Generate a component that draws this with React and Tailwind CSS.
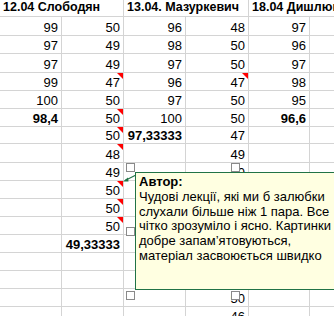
const COLS = ['w-[62px]', 'w-[62px]', 'w-[62px]', 'w-[63px]', 'w-[61px]', 'w-[40px]'];

// value, bold, red comment marker
const ROWS = [
  { h: 'h-[19px]', cells: ['99', '50', '96', '48', '97'] },
  { h: 'h-[18px]', cells: ['97', '49', '98', '50', '96'] },
  { h: 'h-[19px]', cells: ['97', '49', '97', '50', '97'] },
  { h: 'h-[18px]', cells: ['99', '47', '96', '47', '98'], marks: [1, 3] },
  { h: 'h-[18px]', cells: ['100', '50', '97', '50', '95'] },
  { h: 'h-[18px]', cells: ['98,4', '50', '100', '50', '96,6'], bold: [0, 4], marks: [1] },
  { h: 'h-[17px]', cells: ['', '50', '97,33333', '47', ''], bold: [2], marks: [1] },
  { h: 'h-[19px]', cells: ['', '48', '', '49', ''], marks: [1] },
  { h: 'h-[18px]', cells: ['', '49', '', '50', ''] },
  { h: 'h-[18px]', cells: ['', '50', '', '', ''], marks: [1] },
  { h: 'h-[18px]', cells: ['', '50', '', '', ''], marks: [1] },
  { h: 'h-[18px]', cells: ['', '50', '', '', ''], marks: [1] },
  { h: 'h-[18px]', cells: ['', '49,33333', '', '', ''], bold: [1] },
  { h: 'h-[18px]', cells: ['', '', '', '', ''] },
  { h: 'h-[18px]', cells: ['', '', '', '', ''] },
  { h: 'h-[18px]', cells: ['', '', '', '50', ''] },
  { h: 'h-[18px]', cells: ['', '', '', '46', ''] },
];

function Handle({ className }) {
  return <div className={`absolute w-[9px] h-[9px] bg-white border border-[#8a8a8a] ${className}`} />;
}

export default function App() {
  return (
    <div className="relative w-[334px] h-[316px] overflow-hidden bg-white text-black font-['Liberation_Sans',Arial,sans-serif]">
      {/* header row with merged cells */}
      <div className="flex h-[17px] border-b border-[#d4d4d4] text-[12.5px] font-bold leading-[15px] whitespace-nowrap">
        <div className="w-[124px] shrink-0 border-r border-[#d4d4d4] pl-[3px]">12.04 Слободян</div>
        <div className="w-[125px] shrink-0 border-r border-[#d4d4d4] pl-[3px]">13.04. Мазуркевич</div>
        <div className="flex-1 pl-[3px]">18.04 Дишлюк</div>
      </div>

      {ROWS.map((row, r) => (
        <div key={r} className={`flex ${row.h} border-b border-[#d4d4d4]`}>
          {COLS.map((w, c) => {
            const val = row.cells[c] || '';
            const bold = row.bold?.includes(c);
            const mark = row.marks?.includes(c);
            return (
              <div
                key={c}
                className={`relative ${w} shrink-0 border-r border-[#d4d4d4] flex items-end justify-end pr-[3px] text-[13px] leading-[15px] ${bold ? 'font-bold' : ''}`}
              >
                {val}
                {mark && (
                  <svg className="absolute top-0 right-0" width="6" height="6" viewBox="0 0 6 6">
                    <polygon points="0,0 6,0 6,6" fill="#ff0000" />
                  </svg>
                )}
              </div>
            );
          })}
        </div>
      ))}

      {/* comment arrow */}
      <svg className="absolute left-[118px] top-[170px]" width="22" height="16" viewBox="0 0 22 16">
        <line x1="18" y1="5" x2="7" y2="10.5" stroke="#217346" strokeWidth="1.2" />
        <polygon points="5,11.5 10,7.5 10.5,11.5" fill="#217346" />
      </svg>

      {/* comment box */}
      <div className="absolute left-[135px] top-[172px] w-[210px] h-[118px] bg-[#ffffe1] border-[1.5px] border-[#217346] pl-[3px] pt-[2px] text-[13px] leading-[14.8px] whitespace-nowrap">
        <div className="font-bold">Автор:</div>
        <div>Чудові лекції, які ми б залюбки</div>
        <div>слухали більше ніж 1 пара. Все</div>
        <div>чітко зрозуміло і ясно. Картинки</div>
        <div>добре запам’ятовуються,</div>
        <div>матеріал засвоюється швидко</div>
      </div>

      <Handle className="left-[126px] top-[163px]" />
      <Handle className="left-[231px] top-[163px]" />
      <Handle className="left-[126px] top-[227px]" />
      <Handle className="left-[126px] top-[291px]" />
      <Handle className="left-[231px] top-[291px]" />
    </div>
  );
}
